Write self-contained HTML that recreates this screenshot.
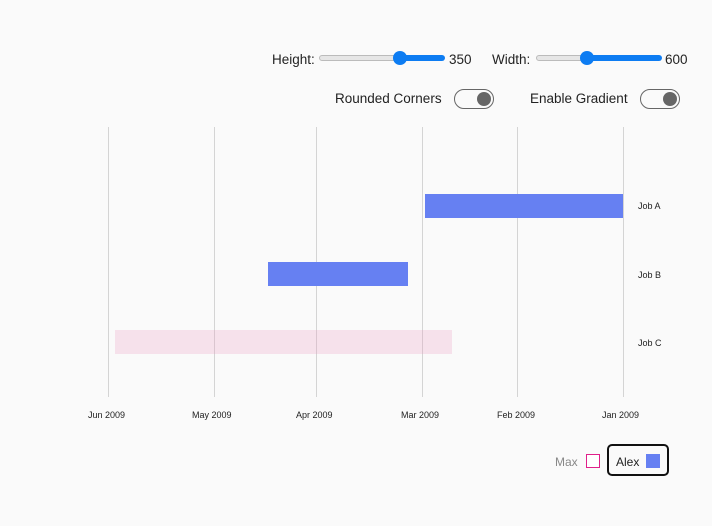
<!DOCTYPE html>
<html><head><style>
body{margin:0;width:712px;height:526px;background:#fafafa;font-family:"Liberation Sans",sans-serif;position:relative;overflow:hidden;color:#222}
.a{position:absolute}
.t{font-size:13.5px}
.s{font-size:9px;color:#222}
.track{position:absolute;height:6px;border-radius:3px;background:#e6e6e6;border:1px solid #bbb;box-sizing:border-box}
.fill{position:absolute;height:6px;border-radius:3px;background:#0d7cf2}
.thumb{position:absolute;width:14px;height:14px;border-radius:50%;background:#0d7cf2}
.tog{position:absolute;width:40px;height:20px;border:1px solid #666;border-radius:10px;box-sizing:border-box}
.tog i{position:absolute;right:2px;top:2px;width:14px;height:14px;border-radius:50%;background:#666}
.vl{position:absolute;top:127px;width:1px;height:270px;background:#d4d4d4}
</style></head><body>
<div class="a t" style="left:272px;top:52px">Height:</div>
<div class="track" style="left:319px;top:55px;width:80px"></div>
<div class="fill" style="left:399px;top:55px;width:46px"></div>
<div class="thumb" style="left:393px;top:51px"></div>
<div class="a t" style="left:449px;top:52px">350</div>
<div class="a t" style="left:492px;top:52px">Width:</div>
<div class="track" style="left:536px;top:55px;width:55px"></div>
<div class="fill" style="left:588px;top:55px;width:74px"></div>
<div class="thumb" style="left:580px;top:51px"></div>
<div class="a t" style="left:665px;top:52px">600</div>
<div class="a t" style="left:335px;top:91px">Rounded Corners</div>
<div class="tog" style="left:454px;top:89px"><i></i></div>
<div class="a t" style="left:530px;top:91px">Enable Gradient</div>
<div class="tog" style="left:640px;top:89px"><i></i></div>

<div class="vl" style="left:108px"></div>
<div class="vl" style="left:214px"></div>
<div class="vl" style="left:316px"></div>
<div class="vl" style="left:422px"></div>
<div class="vl" style="left:517px"></div>
<div class="vl" style="left:623px"></div>

<div class="a" style="left:425px;top:194px;width:198px;height:24px;background:#6680f2"></div>
<div class="a" style="left:268px;top:262px;width:140px;height:24px;background:#6680f2"></div>
<div class="a" style="left:115px;top:330px;width:337px;height:24px;background:rgba(236,150,190,0.25)"></div>

<div class="a s" style="left:638px;top:201px">Job A</div>
<div class="a s" style="left:638px;top:270px">Job B</div>
<div class="a s" style="left:638px;top:338px">Job C</div>

<div class="a s" style="left:88px;top:410px">Jun 2009</div>
<div class="a s" style="left:192px;top:410px">May 2009</div>
<div class="a s" style="left:296px;top:410px">Apr 2009</div>
<div class="a s" style="left:401px;top:410px">Mar 2009</div>
<div class="a s" style="left:497px;top:410px">Feb 2009</div>
<div class="a s" style="left:602px;top:410px">Jan 2009</div>

<div class="a" style="left:555px;top:455px;font-size:12px;color:#888">Max</div>
<div class="a" style="left:586px;top:454px;width:12px;height:12px;border:1.5px solid #e0208a;background:#fff"></div>
<div class="a" style="left:607px;top:444px;width:62px;height:32px;border:2px solid #111;border-radius:5px;box-sizing:border-box"></div>
<div class="a" style="left:616px;top:455px;font-size:12px;color:#222">Alex</div>
<div class="a" style="left:646px;top:454px;width:14px;height:14px;background:#6680f2"></div>
</body></html>
